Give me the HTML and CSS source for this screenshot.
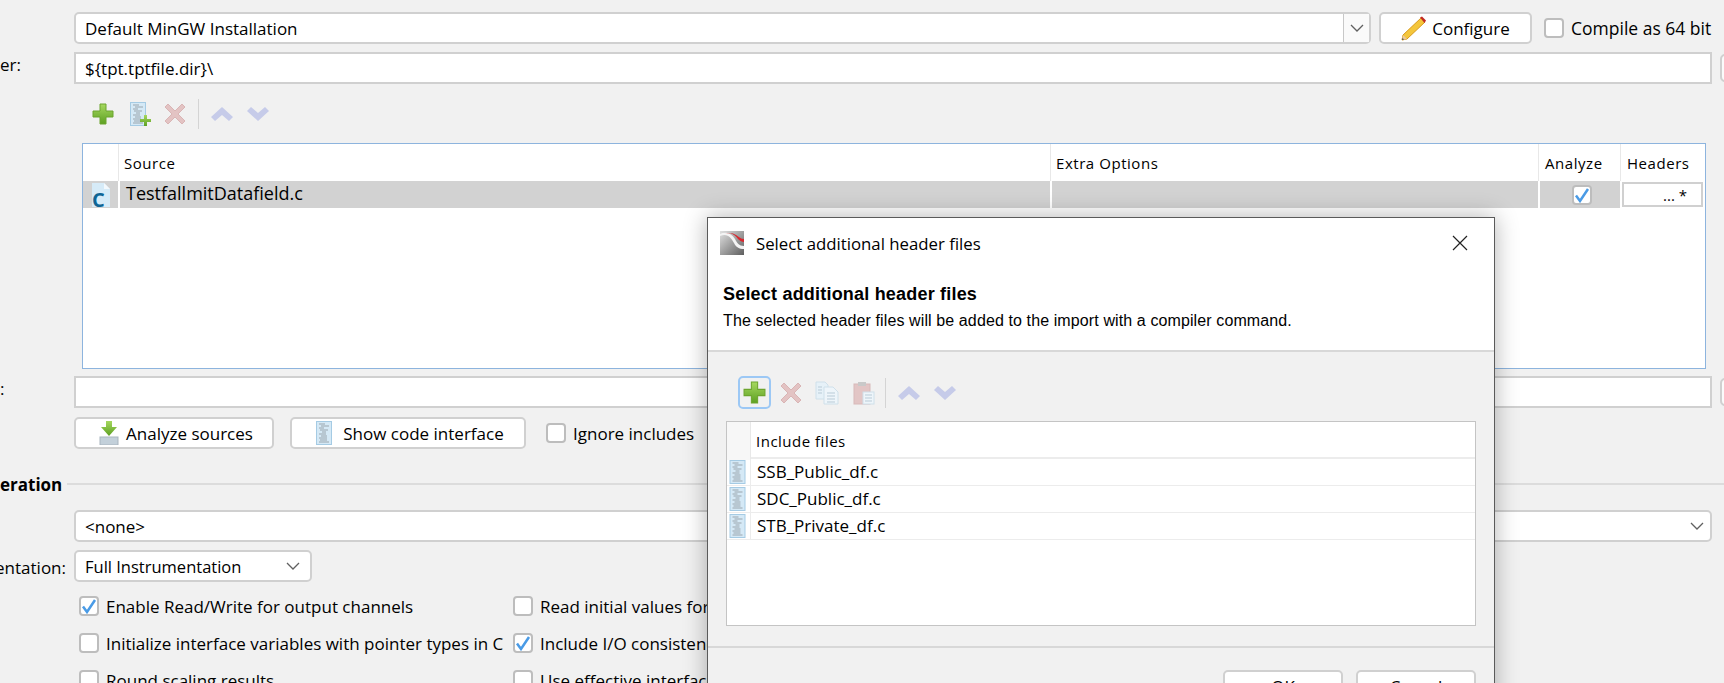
FILE: index.html
```html
<!DOCTYPE html>
<html lang="en">
<head>
    <meta charset="UTF-8">
    <meta name="viewport" content="width=device-width, initial-scale=1.0">
    <title>Select additional header files</title>
    <link rel="stylesheet" href="styles.css">
</head>
<body>
    <svg class="defs" width="0" height="0" aria-hidden="true">
        <defs>
            <linearGradient id="green" x1="0" y1="0" x2="0" y2="1">
                <stop offset="0" stop-color="#a6d85f"/>
                <stop offset="1" stop-color="#5da022"/>
            </linearGradient>
            <linearGradient id="logoGrey" x1="0" y1="0" x2="1" y2="1">
                <stop offset="0" stop-color="#e2e2e2"/>
                <stop offset="1" stop-color="#5e5e5e"/>
            </linearGradient>
            <symbol id="plus" viewBox="0 0 22 22">
                <path d="M8 1h6v7h7v6h-7v7H8v-7H1V8h7z" fill="url(#green)" stroke="#6da52e" stroke-width="1"/>
            </symbol>
            <symbol id="cross" viewBox="0 0 22 22">
                <path d="M4 1l7 7 7-7 3 3-7 7 7 7-3 3-7-7-7 7-3-3 7-7-7-7z" fill="#e3c3c3" stroke="#d9b5b5" stroke-width="1"/>
            </symbol>
            <symbol id="up" viewBox="0 0 24 16">
                <path d="M12 1l11 10-4 4-7-6-7 6-4-4z" fill="#c6cbe9"/>
            </symbol>
            <symbol id="down" viewBox="0 0 24 16">
                <path d="M12 15L1 5l4-4 7 6 7-6 4 4z" fill="#c6cbe9"/>
            </symbol>
            <symbol id="code" viewBox="0 0 16 24">
                <rect x=".5" y=".5" width="15" height="23" fill="#d5e9f6" stroke="#a5cbe4"/>
                <path d="M3 3h6M5 5h8M3 7h5M4 9h8M6 11h4M3 13h7M5 15h6M3 17h8M4 19h7M3 21h10" stroke="#9aa5ad" stroke-width="1" fill="none"/>
            </symbol>
            <symbol id="check" viewBox="0 0 16 16">
                <path d="M2 8.500l4 5.500 8-12" fill="none" stroke="#4a9be6" stroke-width="2.500"/>
            </symbol>
            <symbol id="chevron" viewBox="0 0 14 8">
                <path d="M1 1l6 6 6-6" fill="none" stroke="#606060" stroke-width="1.3"/>
            </symbol>
        </defs>
    </svg>

    <div class="main">
        <div class="row">
            <div class="combo wide">
                <span class="value">Default MinGW Installation</span>
                <span class="arrow split"><svg class="chev"><use href="#chevron"/></svg></span>
            </div>
            <button class="btn configure">
                <svg class="pencil" viewBox="0 0 26 26">
                    <path d="M20 3l4 4L6 24 1 25l1-5z" fill="#f4c63b" stroke="#d99a1c"/>
                    <path d="M20 1.500l2-1 4 4-1.500 2.500z" fill="#c22b23" transform="translate(-1 1)"/>
                    <path d="M2 20l-1 5 5-1z" fill="#e9c9a0"/>
                    <path d="M1.500 23l-.5 2 2-.5z" fill="#444"/>
                </svg>
                Configure
            </button>
            <label class="check compile"><span class="box"></span>Compile as 64 bit</label>
        </div>

        <div class="row gap-top">
            <span class="cut-label">er:</span>
            <div class="field wide-field">${tpt.tptfile.dir}\</div>
            <span class="stub"></span>
        </div>

        <div class="toolbar">
            <svg class="tool plus-icon"><use href="#plus"/></svg>
            <svg class="tool doc-icon" viewBox="0 0 22 24">
                <use href="#code" width="16" height="24"/>
                <path d="M14 13h3v4h4v3h-4v4h-3v-4h-4v-3h4z" fill="url(#green)"/>
            </svg>
            <svg class="tool cross-icon"><use href="#cross"/></svg>
            <span class="sep"></span>
            <svg class="tool arrow-icon"><use href="#up"/></svg>
            <svg class="tool arrow-icon"><use href="#down"/></svg>
        </div>

        <div class="sources">
            <div class="src-head">
                <span class="cell"></span>
                <span class="cell">Source</span>
                <span class="cell">Extra Options</span>
                <span class="cell">Analyze</span>
                <span class="cell">Headers</span>
            </div>
            <div class="src-row">
                <span class="cell icon-cell">
                    <svg class="c-icon" viewBox="0 0 18 24">
                        <path d="M0 0h12l6 6v18H0z" fill="#d6ebf8"/>
                        <path d="M12 0l6 6h-6z" fill="#f3f9fd"/>
                        <text x="0" y="23.500" class="c-letter">C</text>
                    </svg>
                </span>
                <span class="cell name">TestfallmitDatafield.c</span>
                <span class="cell"></span>
                <span class="cell mid"><span class="box"><svg class="tick"><use href="#check"/></svg></span></span>
                <span class="cell"><span class="dots">... *</span></span>
            </div>
        </div>

        <div class="row after-table">
            <span class="cut-label">:</span>
            <div class="field wide-field"></div>
            <span class="stub"></span>
        </div>

        <div class="row gap-top-small">
            <button class="btn analyze">
                <svg class="btn-icon" viewBox="0 0 20 24">
                    <path d="M7 0h6v6h5l-8 9-8-9h5z" fill="url(#green)"/>
                    <rect x="1" y="16" width="18" height="8" fill="#c3d0da" stroke="#a9b5bf"/>
                </svg>
                Analyze sources
            </button>
            <button class="btn show">
                <svg class="btn-icon" viewBox="0 0 16 24"><use href="#code"/></svg>
                Show code interface
            </button>
            <label class="check ignore"><span class="box"></span>Ignore includes</label>
        </div>

        <div class="section">
            <span class="section-title">eration</span>
            <span class="section-line"></span>
        </div>

        <div class="row">
            <div class="combo wide-field">
                <span class="value">&lt;none&gt;</span>
                <span class="arrow"><svg class="chev"><use href="#chevron"/></svg></span>
            </div>
        </div>

        <div class="row gap-top">
            <span class="side-label">entation:</span>
            <div class="combo small">
                <span class="value">Full Instrumentation</span>
                <span class="arrow"><svg class="chev"><use href="#chevron"/></svg></span>
            </div>
        </div>

        <div class="options">
            <label class="check"><span class="box"><svg class="tick"><use href="#check"/></svg></span>Enable Read/Write for output channels</label>
            <label class="check"><span class="box"></span>Read initial values for</label>
            <label class="check"><span class="box"></span>Initialize interface variables with pointer types in C</label>
            <label class="check"><span class="box"><svg class="tick"><use href="#check"/></svg></span>Include I/O consistency</label>
            <label class="check"><span class="box"></span>Round scaling results</label>
            <label class="check"><span class="box"></span>Use effective interface</label>
        </div>
    </div>

    <div class="dialog">
        <div class="titlebar">
            <svg class="logo" viewBox="0 0 24 24">
                <rect width="24" height="24" fill="url(#logoGrey)"/>
                <path d="M0 5c8-3 11 2 14 7 2 4 5 6 10 6v-3c-5 0-7-3-9-7C12 3 6 0 0 3z" fill="#f4f4f4"/>
                <path d="M5 3c6-2 10 1 13 5 2 2 4 3 6 3V8c-3 0-5-2-8-4-3-2-7-3-11-1z" fill="#d9272e"/>
            </svg>
            <span class="title">Select additional header files</span>
            <svg class="close" viewBox="0 0 16 16">
                <path d="M1 1l14 14M15 1L1 15" stroke="#222" stroke-width="1.200" fill="none"/>
            </svg>
        </div>
        <div class="banner">
            <h1>Select additional header files</h1>
            <p>The selected header files will be added to the import with a compiler command.</p>
        </div>
        <div class="dialog-body">
            <div class="toolbar dialog-tools">
                <span class="focus"><svg class="tool plus-small"><use href="#plus"/></svg></span>
                <svg class="tool cross-icon"><use href="#cross"/></svg>
                <svg class="tool copy-icon" viewBox="0 0 24 24">
                    <path d="M1 1h9l3 3v14H1z" fill="#e6f1f8" stroke="#cfe0ea"/>
                    <path d="M9 6h9l5 5v12H9z" fill="#eef5fa" stroke="#cfe0ea"/>
                    <path d="M12 12h8M12 15h8M12 18h8M12 21h8M3 6h4M3 9h4M3 12h4" stroke="#b9cbd7"/>
                </svg>
                <svg class="tool paste-icon" viewBox="0 0 22 24">
                    <rect x="1" y="3" width="16" height="20" fill="#e2c5c5" stroke="#d8b9b9"/>
                    <rect x="5" y="1" width="8" height="4" fill="#c9c9c9"/>
                    <rect x="10" y="11" width="11" height="12" fill="#eef5fa" stroke="#cfe0ea"/>
                    <path d="M12 14h7M12 17h7M12 20h7" stroke="#b9cbd7"/>
                </svg>
                <span class="sep"></span>
                <svg class="tool arrow-icon"><use href="#up"/></svg>
                <svg class="tool arrow-icon"><use href="#down"/></svg>
            </div>
            <div class="includes">
                <div class="inc-head">
                    <span class="cell"></span>
                    <span class="cell">Include files</span>
                </div>
                <div class="inc-row">
                    <span class="cell"><svg class="inc-icon"><use href="#code"/></svg></span>
                    <span class="cell">SSB_Public_df.c</span>
                </div>
                <div class="inc-row">
                    <span class="cell"><svg class="inc-icon"><use href="#code"/></svg></span>
                    <span class="cell">SDC_Public_df.c</span>
                </div>
                <div class="inc-row">
                    <span class="cell"><svg class="inc-icon"><use href="#code"/></svg></span>
                    <span class="cell">STB_Private_df.c</span>
                </div>
            </div>
        </div>
        <div class="dialog-foot">
            <button class="btn foot-btn">OK</button>
            <button class="btn foot-btn">Cancel</button>
        </div>
    </div>
</body>
</html>
```

FILE: styles.css
```css
* {
    box-sizing: border-box;
}

html, body {
    height: 683px;
    margin: 0;
    overflow: hidden;
}

body {
    position: relative;
    background-color: #f1f1f1;
    color: #000;
    font-family: "Open Sans", "Noto Sans", sans-serif;
    font-size: 17px;
}

.defs {
    position: absolute;
}

.main {
    padding: 12px 0 0 74px;
    width: 1760px;
}

.row {
    display: flex;
    align-items: center;
    height: 32px;
}

.gap-top {
    margin-top: 8px;
}

.gap-top-small {
    margin-top: 9px;
}

.after-table {
    margin-top: 7px;
}

.cut-label {
    width: 74px;
    margin-left: -74px;
    padding-bottom: 8px;
}

.combo {
    display: flex;
    align-items: stretch;
    height: 32px;
    background-color: #fff;
    border: 2px solid #d0d0d0;
    border-radius: 5px;
}

.combo .value {
    flex: 1;
    padding-left: 9px;
    line-height: 30px;
}

.combo .arrow {
    display: flex;
    align-items: center;
    justify-content: center;
    width: 26px;
}

.combo .split {
    background-color: #fafafa;
    border-left: 1px solid #c8c8c8;
}

.chev {
    width: 14px;
    height: 8px;
}

.wide {
    width: 1297px;
}

.wide-field {
    width: 1638px;
}

.small {
    width: 238px;
}

.small .arrow {
    width: 30px;
    padding-right: 4px;
}

.small .value {
    font-size: 16.500px;
}

.field {
    height: 32px;
    padding-left: 9px;
    line-height: 30px;
    background-color: #fff;
    border: 2px solid #d0d0d0;
}

.stub {
    width: 20px;
    height: 28px;
    margin-left: 8px;
    border: 2px solid #d0d0d0;
    border-radius: 5px;
    background-color: #fbfbfb;
}

.btn {
    display: flex;
    align-items: center;
    justify-content: center;
    height: 32px;
    padding: 0;
    background-color: #fff;
    border: 2px solid #d0d0d0;
    border-radius: 5px;
    color: #000;
    font-family: inherit;
    font-size: 17px;
}

.configure {
    width: 153px;
    margin-left: 8px;
}

.pencil {
    width: 26px;
    height: 26px;
    margin-right: 5px;
}

.analyze {
    width: 200px;
    padding-left: 4px;
}

.show {
    width: 236px;
    margin-left: 16px;
    padding-left: 4px;
}

.btn-icon {
    width: 20px;
    height: 24px;
    margin-right: 7px;
}

.show .btn-icon {
    width: 16px;
    margin-right: 11px;
}

.check {
    display: flex;
    align-items: center;
    height: 20px;
    white-space: nowrap;
}

.box {
    display: inline-flex;
    flex: none;
    width: 20px;
    height: 20px;
    margin-right: 7px;
    background-color: #fff;
    border: 2px solid #bdbdbd;
    border-radius: 4px;
}

.tick {
    width: 16px;
    height: 16px;
}

.compile {
    margin-left: 12px;
    font-size: 17.500px;
}

.ignore {
    margin-left: 20px;
}

.toolbar {
    display: flex;
    align-items: center;
    height: 30px;
    margin-top: 15px;
    padding-left: 18px;
}

.tool {
    flex: none;
}

.plus-icon {
    width: 22px;
    height: 22px;
}

.doc-icon {
    width: 22px;
    height: 24px;
    margin-left: 16px;
}

.cross-icon {
    width: 22px;
    height: 22px;
    margin-left: 12px;
}

.sep {
    width: 1px;
    height: 30px;
    margin: 0 11px 0 12px;
    background-color: #d4d4d4;
}

.arrow-icon {
    width: 24px;
    height: 16px;
}

.arrow-icon + .arrow-icon {
    margin-left: 12px;
}

.sources {
    width: 1624px;
    height: 226px;
    margin: 14px 0 0 8px;
    background-color: #fff;
    border: 1px solid #8db4de;
}

.src-head, .src-row {
    display: grid;
    grid-template-columns: 35px 932px 488px 82px 85px;
}

.src-head {
    height: 37px;
    line-height: 38px;
    font-size: 15px;
    letter-spacing: .55px;
}

.src-head .cell {
    padding-left: 5px;
    border-left: 1px solid #e8e8e8;
}

.src-head .cell:first-child {
    border-left: none;
}

.src-head .cell:nth-child(4), .src-head .cell:nth-child(5) {
    padding-left: 6px;
}

.src-row {
    height: 27px;
    background: linear-gradient(#d2d2d2, #d2d2d2) no-repeat 0 0 / 1539px 100%;
}

.src-row .cell {
    border-left: 2px solid #fff;
    line-height: 25px;
}

.src-row .cell:first-child {
    border-left: none;
}

.icon-cell {
    display: flex;
    justify-content: center;
    align-items: center;
}

.c-icon {
    width: 18px;
    height: 24px;
    overflow: visible;
}

.c-letter {
    fill: #0f6595;
    font-family: "Open Sans", sans-serif;
    font-size: 20px;
    font-weight: 700;
}

.name {
    padding-left: 6px;
    font-size: 18px;
}

.mid {
    display: flex;
    justify-content: center;
    align-items: center;
    padding-left: 4px;
}

.mid .box {
    margin: 0;
}

.dots {
    display: block;
    height: 25px;
    margin-top: 1px;
    margin-right: 2px;
    padding-right: 14px;
    text-align: right;
    line-height: 22px;
    font-size: 15px;
    background-color: #fff;
    border: 2px solid #d0d0d0;
}

.section {
    display: flex;
    align-items: center;
    height: 20px;
    margin: 26px 0 15px -74px;
}

.section-title {
    width: 67px;
    padding-bottom: 2px;
    font-weight: 700;
}

.section-line {
    width: 1660px;
    height: 2px;
    margin-top: -2px;
    background-color: #dcdcdc;
}

.side-label {
    display: flex;
    justify-content: flex-end;
    width: 74px;
    margin-left: -74px;
    padding: 3px 8px 0 0;
    white-space: nowrap;
}

.options {
    display: grid;
    grid-template-columns: 434px 400px;
    grid-auto-rows: 37px;
    margin: 14px 0 0 5px;
}

.options .check {
    height: 20px;
}

/* dialog window lying over the page */
.dialog {
    position: absolute;
    left: 707px;
    top: 217px;
    width: 788px;
    height: 520px;
    background-color: #f1f1f1;
    border: 1px solid #5a5a5a;
    box-shadow: 0 0 22px rgba(0, 0, 0, .3);
}

.titlebar {
    display: flex;
    align-items: center;
    height: 50px;
    padding-left: 12px;
    background-color: #fff;
}

.logo {
    width: 24px;
    height: 24px;
}

.title {
    flex: 1;
    margin-left: 12px;
    font-size: 16.800px;
}

.close {
    width: 16px;
    height: 16px;
    margin-right: 26px;
}

.banner {
    height: 84px;
    padding: 14px 0 0 15px;
    background-color: #fff;
    border-bottom: 2px solid #d8d8d8;
    font-family: "Liberation Sans", Arial, sans-serif;
}

.banner h1 {
    margin: 0;
    font-size: 18px;
    line-height: 24px;
    letter-spacing: .2px;
}

.banner p {
    margin: 5px 0 0;
    font-size: 16px;
    line-height: 20px;
    letter-spacing: .11px;
}

.dialog-body {
    height: 294px;
    padding: 24px 18px 0;
}

.dialog-tools {
    margin-top: 0;
    height: 33px;
    padding-left: 12px;
}

.focus {
    display: flex;
    align-items: center;
    justify-content: center;
    width: 33px;
    height: 33px;
    border: 2px solid #9cc8f5;
    border-radius: 5px;
}

.plus-small {
    width: 23px;
    height: 23px;
}

.dialog-tools .cross-icon {
    margin-left: 9px;
}

.copy-icon {
    width: 24px;
    height: 24px;
    margin-left: 13px;
}

.paste-icon {
    width: 22px;
    height: 24px;
    margin-left: 14px;
}

.dialog-tools .sep {
    margin: 0 11px 0 10px;
}

.includes {
    height: 205px;
    margin-top: 12px;
    background-color: #fff;
    border: 1px solid #c4c4c4;
}

.inc-head, .inc-row {
    display: grid;
    grid-template-columns: 23px 1fr;
}

.inc-head {
    height: 37px;
    line-height: 38px;
    font-size: 15px;
    letter-spacing: .5px;
    border-bottom: 2px solid #ececec;
}

.inc-head .cell:first-child {
    background-color: #f7f7f7;
}

.inc-head .cell:last-child {
    padding-left: 5px;
    border-left: 1px solid #e8e8e8;
}

.inc-row {
    height: 27px;
    line-height: 25px;
    border-bottom: 1px solid #ececec;
}

.inc-row .cell:last-child {
    padding-left: 6px;
    border-left: 1px solid #ececec;
}

.inc-row .cell:first-child {
    display: flex;
    align-items: center;
    padding-left: 2px;
}

.inc-icon {
    width: 17px;
    height: 24px;
}

.dialog-foot {
    display: flex;
    justify-content: flex-end;
    gap: 13px;
    height: 80px;
    padding: 22px 18px 0 0;
    border-top: 2px solid #d8d8d8;
}

.foot-btn {
    width: 120px;
}
```
